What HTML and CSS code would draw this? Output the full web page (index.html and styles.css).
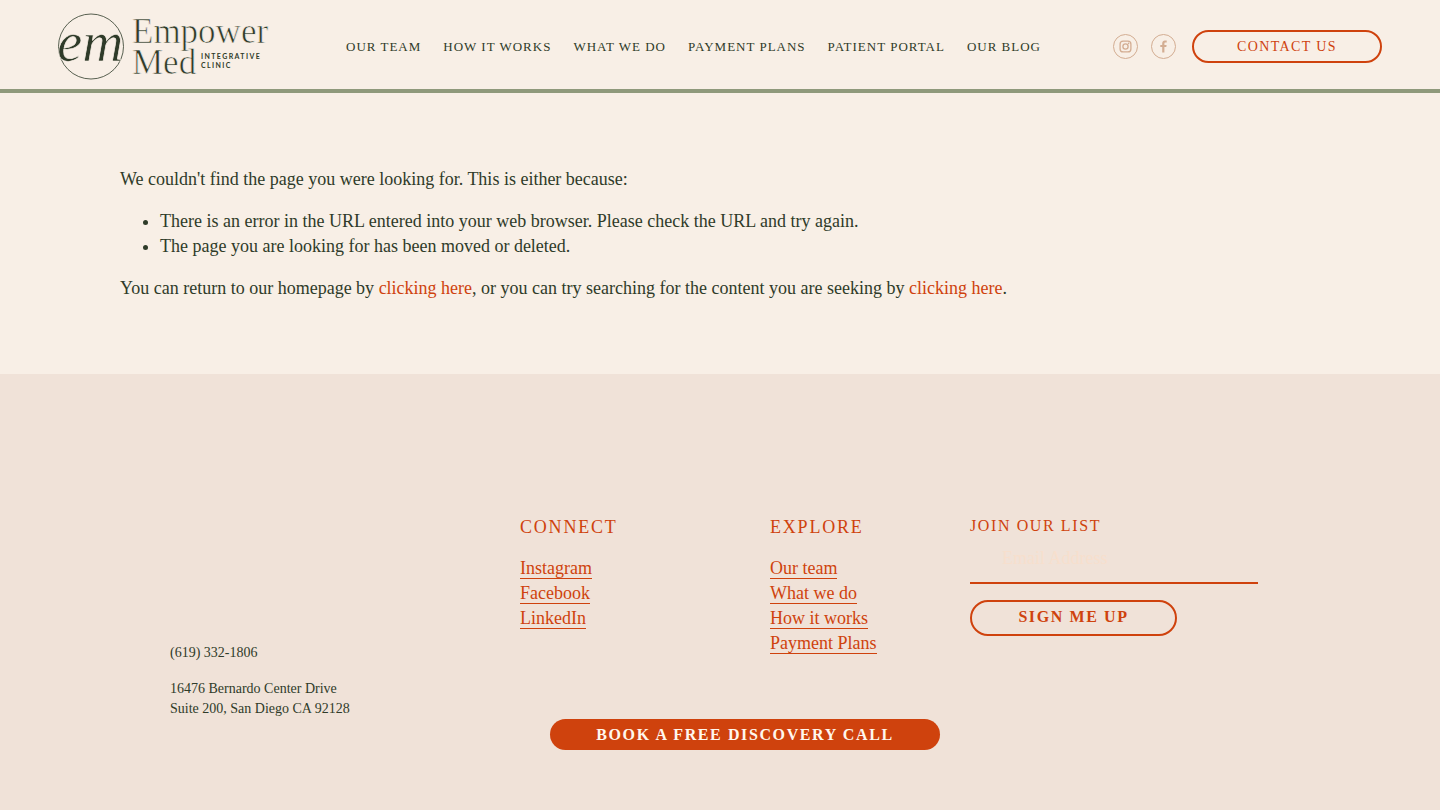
FILE: index.html
```
<!DOCTYPE html>
<html lang="en">
<head>
  <meta charset="UTF-8"/>
  <meta name="viewport" content="width=device-width,initial-scale=1"/>
  <title>Empower Med Integrative Clinic</title>
  <link rel="stylesheet" href="styles.css">
</head>
<body>

  <header class="header">
    <a class="logo" href="#" aria-label="Empower Med Integrative Clinic">
      <svg width="216" height="68" viewBox="0 0 216 68">
        <circle cx="33" cy="34.5" r="32.5"/>
        <text class="logo-mark" x="-1" y="49">em</text>
        <text class="logo-name" x="74" y="31">Empower</text>
        <text class="logo-name" x="74" y="62">Med</text>
        <text class="logo-sub" x="143" y="47">INTEGRATIVE</text>
        <text class="logo-sub" x="143" y="56">CLINIC</text>
      </svg>
    </a>

    <nav class="nav">
      <a href="#">OUR TEAM</a>
      <a href="#">HOW IT WORKS</a>
      <a href="#">WHAT WE DO</a>
      <a href="#">PAYMENT PLANS</a>
      <a href="#">PATIENT PORTAL</a>
      <a href="#">OUR BLOG</a>
    </nav>

    <div class="actions">
      <a class="social" href="#" aria-label="Instagram">
        <svg width="25" height="25" viewBox="0 0 25 25">
          <circle cx="12.5" cy="12.5" r="12"/>
          <rect class="thick" x="7.1" y="7.1" width="10.8" height="10.8" rx="3"/>
          <circle class="thick" cx="12.5" cy="12.5" r="2.6"/>
          <circle class="solid" cx="15.6" cy="9.4" r="0.8"/>
        </svg>
      </a>
      <a class="social" href="#" aria-label="Facebook">
        <svg width="25" height="25" viewBox="0 0 25 25">
          <circle cx="12.5" cy="12.5" r="12"/>
          <path class="solid" d="M11.2 18.6v-5.5H9.3v-2.2h1.9V9.3c0-1.9 1.1-2.9 2.8-2.9.8 0 1.5.1 1.7.1v2h-1.2c-.9 0-1.1.4-1.1 1.1v1.3h2.2l-.3 2.2h-1.9v5.5z"/>
        </svg>
      </a>
      <a class="btn contact" href="#">CONTACT US</a>
    </div>
  </header>

  <main class="content">
    <p>We couldn't find the page you were looking for. This is either because:</p>
    <ul>
      <li>There is an error in the URL entered into your web browser. Please check the URL and try again.</li>
      <li>The page you are looking for has been moved or deleted.</li>
    </ul>
    <p>You can return to our homepage by <a href="#">clicking here</a>, or you can try searching for the content you are seeking by <a href="#">clicking here</a>.</p>
  </main>

  <footer class="footer">
    <address class="address">
      <p>(619) 332-1806</p>
      <p>16476 Bernardo Center Drive<br>Suite 200, San Diego CA 92128</p>
    </address>

    <section>
      <h2>CONNECT</h2>
      <ul class="links">
        <li><a href="#">Instagram</a></li>
        <li><a href="#">Facebook</a></li>
        <li><a href="#">LinkedIn</a></li>
      </ul>
    </section>

    <section>
      <h2>EXPLORE</h2>
      <ul class="links">
        <li><a href="#">Our team</a></li>
        <li><a href="#">What we do</a></li>
        <li><a href="#">How it works</a></li>
        <li><a href="#">Payment Plans</a></li>
      </ul>
    </section>

    <form class="signup" onsubmit="event.preventDefault();">
      <label for="email">JOIN OUR LIST</label>
      <input id="email" type="email" placeholder="Email Address" />
      <button class="btn" type="submit">SIGN ME UP</button>
    </form>

    <a class="book" href="#">BOOK A FREE DISCOVERY CALL</a>
  </footer>

</body>
</html>
```
FILE: styles.css
```
* {
  box-sizing: border-box;
}
body {
  margin: 0;
  min-height: 100vh;
  display: flex;
  flex-direction: column;
  font-family: 'Liberation Serif', 'Times New Roman', serif;
  font-size: 18px;
  line-height: 25px;
  background: #f8efe6;
  color: #2f3b29;
}

a {
  color: #cf420d;
  text-decoration: none;
}

.header {
  display: flex;
  justify-content: space-between;
  align-items: center;
  padding: 12px 58px 9px;
  border-bottom: 4px solid #8f997b;
}

.logo svg,
.social svg {
  display: block;
  overflow: visible;
}

.logo circle {
  fill: none;
  stroke: #2f3b29;
  stroke-width: 0.8;
}

.logo text {
  fill: #2f3b29;
}

/* background-coloured outline thins the letters */
.logo-mark,
.logo-name {
  stroke: #f8efe6;
  stroke-width: 0.7;
}

.logo-mark {
  font-size: 57px;
  font-style: italic;
}

.logo-name {
  font-size: 35px;
}

.logo-sub {
  font-family: Lato, sans-serif;
  font-size: 7px;
  font-weight: 700;
  letter-spacing: 0.2em;
}

.nav {
  display: flex;
  gap: 22px;
}

.nav a {
  color: #2f3b29;
  font-size: 13px;
  letter-spacing: 1px;
  white-space: nowrap;
}

.actions {
  display: flex;
  align-items: center;
}

.social {
  margin-right: 13px;
}

.social circle,
.social rect {
  fill: none;
  stroke: #d3ad92;
}

.social .thick {
  stroke-width: 1.3;
}

.social .solid {
  fill: #d3ad92;
  stroke: none;
}

.btn {
  border: 2px solid #cf420d;
  border-radius: 18px;
  background: transparent;
  color: #cf420d;
  font-family: inherit;
  letter-spacing: 0.1em;
  text-align: center;
  cursor: pointer;
}

.contact {
  width: 190px;
  margin-left: 3px;
  padding: 2px 0;
  font-size: 14px;
}

.content {
  padding: 74px 120px 73px;
}

.content p,
.content ul {
  margin: 0 0 17px;
}

.content p:last-child {
  margin-bottom: 0;
}

.content ul {
  padding-left: 40px;
}

.footer {
  flex: 1;
  display: grid;
  grid-template-columns: 7fr 5fr 4fr 6fr;
  grid-template-rows: minmax(204px, auto) auto;
  align-content: start;
  padding: 141px 170px 60px;
  background: #f0e2d8;
}

.address {
  align-self: end;
  font-size: 14px;
  font-style: normal;
  line-height: 20px;
}

.address p {
  margin: 16px 0 0;
}

h2 {
  margin: 0 0 16px;
  color: #cf420d;
  font-size: 18px;
  font-weight: 400;
  letter-spacing: 0.1em;
}

.links {
  margin: 0;
  padding: 0;
  list-style: none;
}

.links a {
  border-bottom: 1px solid #cf420d;
}

.signup {
  display: flex;
  flex-direction: column;
  align-items: flex-start;
}

.signup label {
  color: #cf420d;
  font-size: 16px;
  line-height: 22px;
  letter-spacing: 0.1em;
}

.signup input {
  width: 96%;
  height: 47px;
  margin-bottom: 16px;
  padding: 0 32px 2px;
  border: none;
  border-bottom: 2px solid #cf420d;
  background: transparent;
  color: #2f3b29;
  font-family: inherit;
  font-size: 18px;
}

.signup input::placeholder {
  color: #f7dfcd;
  opacity: 1;
}

.signup .btn {
  width: 207px;
  height: 36px;
  padding: 0 0 3px;
  font-size: 16px;
  font-weight: 700;
}

.book {
  grid-column: 2 / 4;
  margin: 0 30px;
  padding: 3px 0;
  border-radius: 18px;
  background: #cf420d;
  color: #fff7ee;
  font-size: 16px;
  font-weight: 700;
  letter-spacing: 0.1em;
  text-align: center;
}
```
